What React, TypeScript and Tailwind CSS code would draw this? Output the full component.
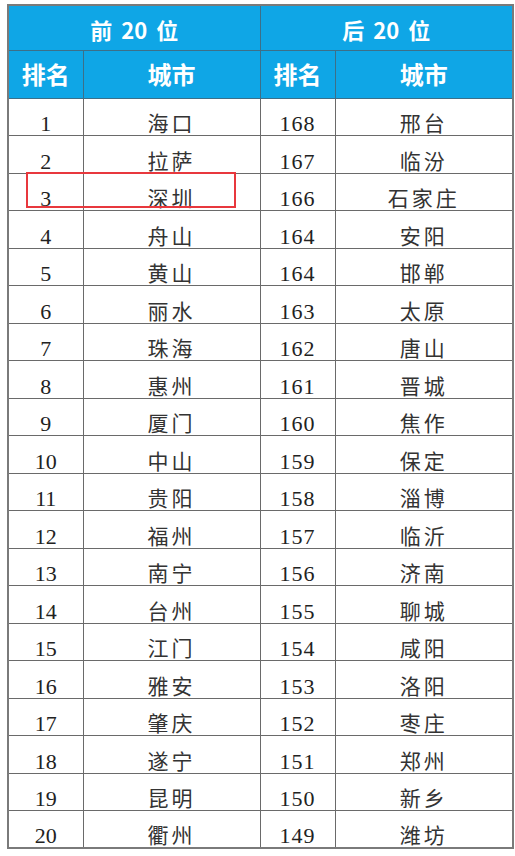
const top20: [number, string][] = [
  [1, '海口'], [2, '拉萨'], [3, '深圳'], [4, '舟山'], [5, '黄山'],
  [6, '丽水'], [7, '珠海'], [8, '惠州'], [9, '厦门'], [10, '中山'],
  [11, '贵阳'], [12, '福州'], [13, '南宁'], [14, '台州'], [15, '江门'],
  [16, '雅安'], [17, '肇庆'], [18, '遂宁'], [19, '昆明'], [20, '衢州'],
]

const bottom20: [number, string][] = [
  [168, '邢台'], [167, '临汾'], [166, '石家庄'], [164, '安阳'], [164, '邯郸'],
  [163, '太原'], [162, '唐山'], [161, '晋城'], [160, '焦作'], [159, '保定'],
  [158, '淄博'], [157, '临沂'], [156, '济南'], [155, '聊城'], [154, '咸阳'],
  [153, '洛阳'], [152, '枣庄'], [151, '郑州'], [150, '新乡'], [149, '潍坊'],
]

const numCell =
  "border border-[#6a6a6a] text-center align-bottom pb-0 text-[22px] leading-[23px] text-[#222] [font-family:'Liberation_Serif',serif]"
const cityCell =
  "border border-[#6a6a6a] text-center align-bottom pb-0 text-[21px] leading-[26px] tracking-[3px] text-[#333] [font-family:'Noto_Sans_CJK_SC',sans-serif]"
const headCell =
  "border border-[#3d6f88] bg-[#0fa6e6] text-white text-center font-bold [font-family:'Noto_Sans_CJK_SC',sans-serif]"

export default function App() {
  return (
    <div className="min-h-[856px] w-[515px] bg-white pt-[4px] pl-[7px]">
      <div className="relative w-[505px]">
        <table className="w-[505px] table-fixed border-collapse border-2 border-[#7a7a7a]">
          <colgroup>
            <col className="w-[75px]" />
            <col className="w-[177px]" />
            <col className="w-[75px]" />
            <col className="w-[178px]" />
          </colgroup>
          <thead>
            <tr className="h-[45px]">
              <th colSpan={2} className={headCell + ' text-[22px] pt-[4px] [word-spacing:4px]'}>
                前 20 位
              </th>
              <th colSpan={2} className={headCell + ' text-[22px] pt-[4px] [word-spacing:4px]'}>
                后 20 位
              </th>
            </tr>
            <tr className="h-[48px]">
              <th className={headCell + ' text-[24px]'}>排名</th>
              <th className={headCell + ' text-[24px]'}>城市</th>
              <th className={headCell + ' text-[24px]'}>排名</th>
              <th className={headCell + ' text-[24px]'}>城市</th>
            </tr>
          </thead>
          <tbody>
            {top20.map(([rank, city], i) => (
              <tr key={rank} className="h-[37.5px]">
                <td className={numCell}>{rank}</td>
                <td className={cityCell}>{city}</td>
                <td className={numCell + ' tracking-[1px]'}>{bottom20[i][0]}</td>
                <td className={cityCell}>{bottom20[i][1]}</td>
              </tr>
            ))}
          </tbody>
        </table>
        {/* highlight around 深圳 */}
        <div className="pointer-events-none absolute left-[19px] top-[168px] h-[36px] w-[210px] border-2 border-[#e8383d]" />
      </div>
    </div>
  )
}
